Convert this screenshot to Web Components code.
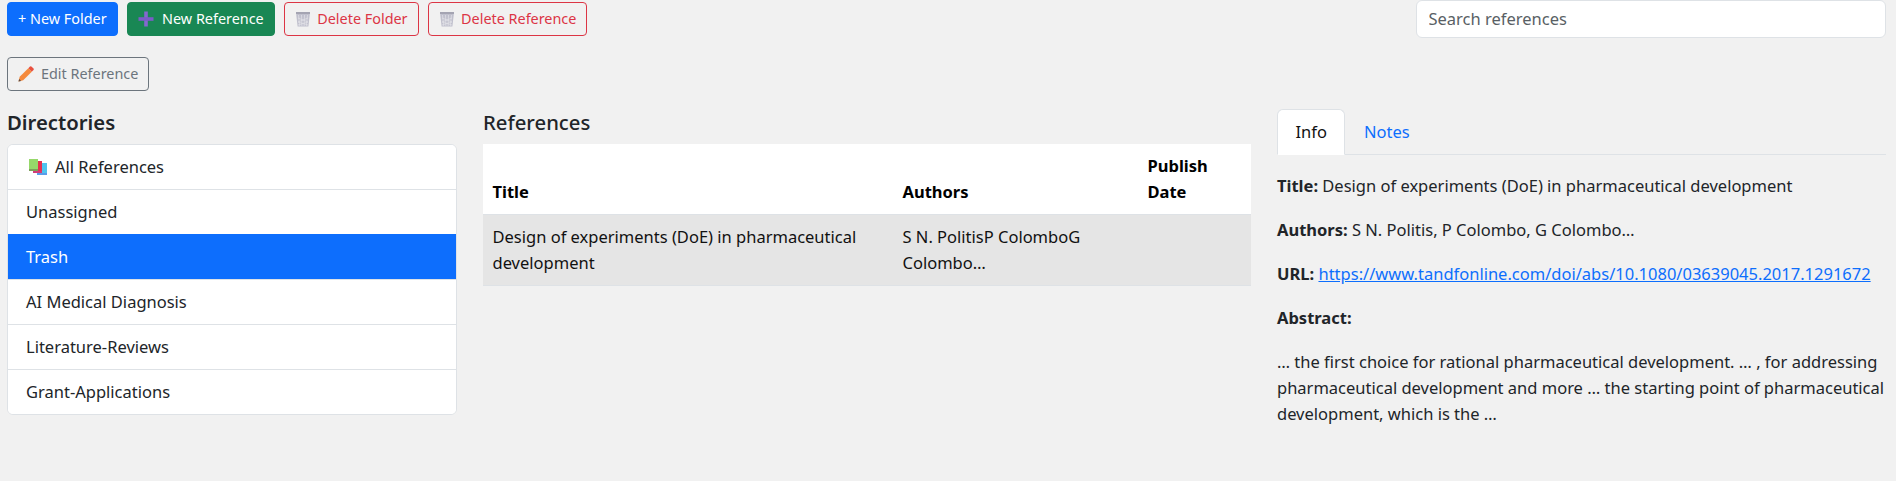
<!DOCTYPE html>
<html>
<head>
<meta charset="utf-8">
<title>References</title>
<style>
  html, body { margin: 0; height: 100%; }
  body { background: #f1f1f1; font-family: "Noto Sans", "Open Sans", sans-serif; font-size: 16.5px; color: #212529; overflow: hidden; }
</style>
</head>
<body>
<ref-app></ref-app>
<script>
// icons, drawn to look like the emoji in the original
const ICONS = {
  plus: `<svg width="16" height="16" viewBox="0 0 16 16"><rect x="6.200" y="0.500" width="3.600" height="15" fill="#8468cf"/><rect x="0.500" y="6.200" width="15" height="3.600" fill="#7b5cc8"/></svg>`,
  trash: `<svg width="16" height="16" viewBox="0 0 16 16"><path d="M1 1.500h14l-1.600 14h-10.800z" fill="#c0c0cd"/><rect x="1" y="1" width="14" height="2" fill="#a4a4b2"/><path d="M3.500 4l1.200 11M6.500 4l.4 11M9.500 4l-.4 11M12.500 4l-1.200 11M3 7l10 4M13 7l-10 4M3 11l10 3M13 11l-10 3" stroke="#e2e2e8" stroke-width=".7" fill="none"/></svg>`,
  pencil: `<svg width="16" height="16" viewBox="0 0 16 16"><path d="M0.500 15.500l1.200-4.700 8.600-8.600 3.500 3.500-8.600 8.600z" fill="#f58a3c"/><path d="M0.500 15.500l.6-2.600 2 2z" fill="#5a4a42"/><path d="M10.300 2.200l1.700-1.700a1 1 0 0 1 1.400 0l2.100 2.100a1 1 0 0 1 0 1.400l-1.700 1.700z" fill="#e8503f"/></svg>`,
  books: `<svg width="18" height="16" viewBox="0 0 18 16"><rect x="8" y="4" width="10" height="12" fill="#5b9be8"/><rect x="9" y="4" width="9" height="10" fill="#4fc3ee"/><rect x="4" y="2" width="9" height="12" fill="#d23c78"/><rect x="5" y="2" width="8" height="10" fill="#e5304f"/><rect x="0" y="0" width="9" height="12" fill="#7d9e5a"/><rect x="0" y="0" width="9" height="10" fill="#96d86a"/></svg>`
};

const buttonTemplate = document.createElement('template');
buttonTemplate.innerHTML = `
<style>
  :host { display: inline-block; }
  button {
    box-sizing: border-box;
    display: flex;
    align-items: center;
    gap: 8px;
    height: 34px;
    padding: 0 10px;
    font-family: inherit;
    font-size: 14.400px;
    line-height: 20px;
    white-space: nowrap;
    border: 1px solid transparent;
    border-radius: 4px;
    background: transparent;
  }
  :host([variant="primary"]) button { background: #0d6efd; border-color: #0d6efd; color: #fff; }
  :host([variant="success"]) button { background: #198754; border-color: #198754; color: #fff; }
  :host([variant="danger"]) button { border-color: #dc3545; color: #dc3545; gap: 6px; }
  :host([variant="secondary"]) button { border-color: #6c757d; color: #6c757d; gap: 7px; }
  .icon { display: flex; }
  .icon:empty { display: none; }
</style>
<button><span class="icon"></span><slot></slot></button>
`;

class RefButton extends HTMLElement {
  constructor() {
    super();
    this.attachShadow({ mode: 'open' });
    this.shadowRoot.appendChild(buttonTemplate.content.cloneNode(true));
  }

  connectedCallback() {
    const name = this.getAttribute('icon');
    this.shadowRoot.querySelector('.icon').innerHTML = name ? ICONS[name] : '';
  }
}
customElements.define('ref-button', RefButton);

const searchTemplate = document.createElement('template');
searchTemplate.innerHTML = `
<style>
  :host { display: block; }
  input {
    box-sizing: border-box;
    display: block;
    width: 100%;
    height: 38px;
    padding: 0 12px 2px;
    font-family: inherit;
    font-size: 16.500px;
    background: #fff;
    border: 1px solid #dee2e6;
    border-radius: 6px;
    outline: none;
  }
  input::placeholder { color: #595f65; opacity: 1; }
</style>
<input type="text" placeholder="Search references">
`;

class RefSearch extends HTMLElement {
  constructor() {
    super();
    this.attachShadow({ mode: 'open' });
    this.shadowRoot.appendChild(searchTemplate.content.cloneNode(true));
  }
}
customElements.define('ref-search', RefSearch);

const itemTemplate = document.createElement('template');
itemTemplate.innerHTML = `
<style>
  :host {
    display: flex;
    align-items: center;
    gap: 8px;
    box-sizing: border-box;
    height: 45px;
    padding: 0 18px 2px;
    background: #fff;
    border-top: 1px solid #dee2e6;
    margin: 0 -1px;
    border-left: 1px solid #dee2e6;
    border-right: 1px solid #dee2e6;
  }
  :host(:first-child) { border-top: 0; height: 44px; padding-left: 21px; }
  :host([active]) { background: #0d6efd; color: #fff; border-color: #0d6efd; }
  .icon { display: flex; margin-top: 1px; }
  .icon:empty { display: none; }
</style>
<span class="icon"></span><slot></slot>
`;

class DirItem extends HTMLElement {
  constructor() {
    super();
    this.attachShadow({ mode: 'open' });
    this.shadowRoot.appendChild(itemTemplate.content.cloneNode(true));
  }

  connectedCallback() {
    const name = this.getAttribute('icon');
    this.shadowRoot.querySelector('.icon').innerHTML = name ? ICONS[name] : '';
  }
}
customElements.define('dir-item', DirItem);

const listTemplate = document.createElement('template');
listTemplate.innerHTML = `
<style>
  :host { display: block; }
  h2 { margin: 0; height: 35px; font-size: 20.300px; line-height: 26px; font-weight: 600; }
  .list {
    box-sizing: border-box;
    background: #fff;
    border: 1px solid #dee2e6;
    border-radius: 6px;
    overflow: hidden;
  }
</style>
<h2>Directories</h2>
<div class="list"><slot></slot></div>
`;

class DirList extends HTMLElement {
  constructor() {
    super();
    this.attachShadow({ mode: 'open' });
    this.shadowRoot.appendChild(listTemplate.content.cloneNode(true));
  }
}
customElements.define('dir-list', DirList);

const tableTemplate = document.createElement('template');
tableTemplate.innerHTML = `
<style>
  :host { display: block; }
  h2 { margin: 0; height: 35px; font-size: 20.300px; line-height: 26px; font-weight: 500; }
  table { width: 100%; border-collapse: collapse; table-layout: fixed; background: #fff; }
  th, td { padding: 9px 9.500px; line-height: 26px; text-align: left; color: #000; }
  th { vertical-align: bottom; font-weight: 700; border-bottom: 1px solid #dee2e6; }
  td { vertical-align: top; background: #e5e5e5; border-bottom: 1px solid #dee2e6; color: #111; }
</style>
<h2>References</h2>
<table>
  <colgroup><col style="width:410px"><col style="width:245px"><col></colgroup>
  <thead><tr><th>Title</th><th>Authors</th><th>Publish Date</th></tr></thead>
  <tbody><tr>
    <td>Design of experiments (DoE) in pharmaceutical development</td>
    <td>S N. PolitisP ColomboG Colombo…</td>
    <td></td>
  </tr></tbody>
</table>
`;

class RefTable extends HTMLElement {
  constructor() {
    super();
    this.attachShadow({ mode: 'open' });
    this.shadowRoot.appendChild(tableTemplate.content.cloneNode(true));
  }
}
customElements.define('ref-table', RefTable);

const detailTemplate = document.createElement('template');
detailTemplate.innerHTML = `
<style>
  :host { display: block; }
  .tabs { display: flex; height: 46px; box-sizing: border-box; border-bottom: 1px solid #dee2e6; margin-bottom: 18px; }
  .tab { box-sizing: border-box; height: 46px; padding: 0 17.500px 2px; display: flex; align-items: center; border: 1px solid transparent; color: #0d6efd; }
  .tab.active { background: #fff; color: #111; border-color: #dee2e6 #dee2e6 #fff; border-radius: 6px 6px 0 0; }
  p { margin: 0 0 18px; line-height: 26px; }
  b { font-weight: 700; }
  a { color: #0d6efd; text-decoration: underline; }
</style>
<div class="tabs"><div class="tab active">Info</div><div class="tab">Notes</div></div>
<p><b>Title:</b> Design of experiments (DoE) in pharmaceutical development</p>
<p><b>Authors:</b> S N. Politis, P Colombo, G Colombo…</p>
<p><b>URL:</b> <a href="#">https://www.tandfonline.com/doi/abs/10.1080/03639045.2017.1291672</a></p>
<p><b>Abstract:</b></p>
<p>… the first choice for rational pharmaceutical development. … , for addressing pharmaceutical development and more … the starting point of pharmaceutical development, which is the …</p>
`;

class RefDetail extends HTMLElement {
  constructor() {
    super();
    this.attachShadow({ mode: 'open' });
    this.shadowRoot.appendChild(detailTemplate.content.cloneNode(true));
  }
}
customElements.define('ref-detail', RefDetail);

const appTemplate = document.createElement('template');
appTemplate.innerHTML = `
<style>
  :host { display: block; padding: 0 10.500px 0 7px; }
  .top { display: flex; justify-content: space-between; align-items: flex-start; }
  .actions { display: flex; gap: 9.500px; padding-top: 2px; }
  .search { width: 470px; }
  .edit { display: flex; margin-top: 19px; }
  .columns { display: grid; grid-template-columns: 450px 768px 1fr; column-gap: 26px; margin-top: 18px; }
</style>
<div class="top">
  <div class="actions">
    <ref-button variant="primary">+ New Folder</ref-button>
    <ref-button variant="success" icon="plus">New Reference</ref-button>
    <ref-button variant="danger" icon="trash">Delete Folder</ref-button>
    <ref-button variant="danger" icon="trash">Delete Reference</ref-button>
  </div>
  <div class="search"><ref-search></ref-search></div>
</div>
<div class="edit"><ref-button variant="secondary" icon="pencil">Edit Reference</ref-button></div>
<div class="columns">
  <dir-list>
    <dir-item icon="books">All References</dir-item>
    <dir-item>Unassigned</dir-item>
    <dir-item active>Trash</dir-item>
    <dir-item>AI Medical Diagnosis</dir-item>
    <dir-item>Literature-Reviews</dir-item>
    <dir-item>Grant-Applications</dir-item>
  </dir-list>
  <ref-table></ref-table>
  <ref-detail></ref-detail>
</div>
`;

class RefApp extends HTMLElement {
  constructor() {
    super();
    this.attachShadow({ mode: 'open' });
    this.shadowRoot.appendChild(appTemplate.content.cloneNode(true));
  }
}
customElements.define('ref-app', RefApp);
</script>
</body>
</html>
